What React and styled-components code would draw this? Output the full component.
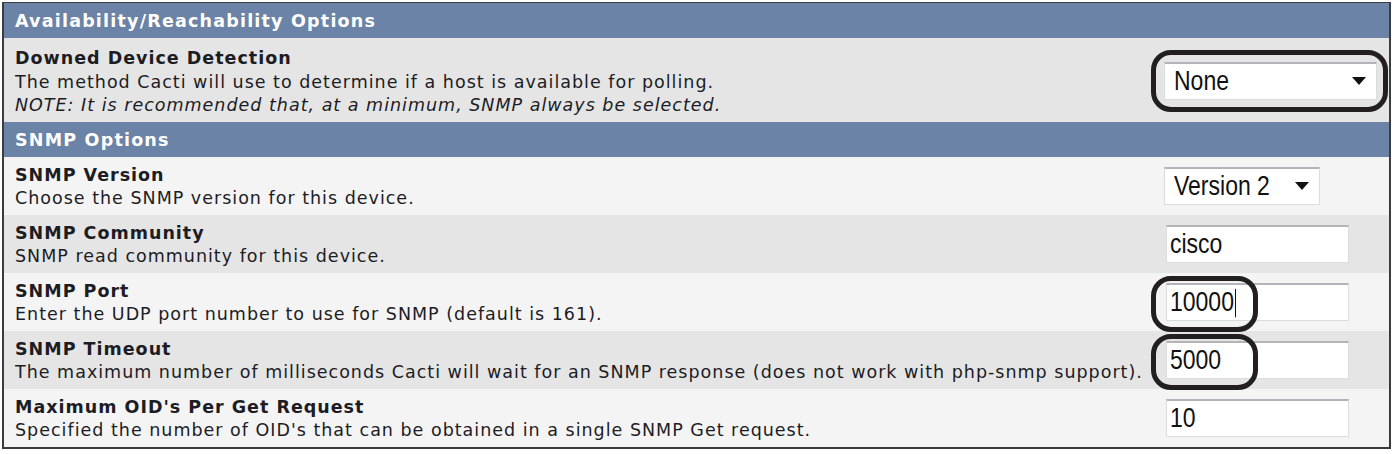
import { createGlobalStyle, styled } from "styled-components";

const Global = createGlobalStyle`
  html, body {
    margin: 0;
    padding: 0;
    background: #ffffff;
  }
`;

const Panel = styled.div`
  box-sizing: border-box;
  width: 1389px;
  margin: 2px 0 0 2px;
  border: 2px solid #3c3c3c;
  border-top-width: 1px;
  font-family: "DejaVu Sans", Verdana, sans-serif;
  color: #1c1c24;
`;

const Header = styled.div`
  height: 35px;
  display: flex;
  align-items: center;
  padding: 1px 0 0 11px;
  box-sizing: border-box;
  background: #6a83a6;
  color: #ffffff;
  font-weight: bold;
  font-size: 17.5px;
  letter-spacing: 1.2px;
`;

const Row = styled.div`
  display: grid;
  grid-template-columns: 1fr 225px;
  align-items: center;
  padding: ${(p) => (p.$tall ? "9px 0 4px" : "7px 0 4px")};
  background: ${(p) => (p.$alt ? "#e5e5e5" : "#f4f4f4")};
`;

const Text = styled.div`
  padding-left: 11px;
  font-size: 17.5px;
  letter-spacing: 1px;
  line-height: 23.5px;
  white-space: nowrap;
`;

const Title = styled.div`
  font-weight: bold;
`;

const Note = styled.div`
  font-style: italic;
`;

const Cell = styled.div`
  display: flex;
  align-items: center;
  margin-top: -3px;
  padding-left: ${(p) => p.$pad || 0}px;
`;

const Field = styled.div`
  position: relative;
  box-sizing: border-box;
  width: ${(p) => p.$w}px;
  height: 38px;
  display: flex;
  align-items: center;
  justify-content: space-between;
  padding: 0 10px 0 ${(p) => (p.$text ? 3 : 9)}px;
  background: #ffffff;
  border: 1px solid #dcdcdc;
  border-top: 2px solid #b4b4b8;
  font-family: "Liberation Sans", Arial, sans-serif;
  font-size: 23px;
  color: #111111;
`;

const Value = styled.span`
  display: inline-flex;
  align-items: center;
  transform: scaleY(1.18);
`;

const Arrow = styled.span`
  width: 0;
  height: 0;
  border-left: 7px solid transparent;
  border-right: 7px solid transparent;
  border-top: 8px solid #111111;
`;

const Caret = styled.span`
  display: inline-block;
  width: 1px;
  height: 24px;
  margin-left: 1px;
  background: #111111;
`;

const Mark = styled.div`
  position: absolute;
  left: ${(p) => p.$l}px;
  top: ${(p) => p.$t}px;
  width: ${(p) => p.$w}px;
  height: ${(p) => p.$h}px;
  box-sizing: border-box;
  border: 5px solid #231f20;
  border-radius: 20px;
  pointer-events: none;
`;

function Select({ w, value, children }) {
  return (
    <Field $w={w}>
      <Value>{value}</Value>
      <Arrow />
      {children}
    </Field>
  );
}

function Input({ value, caret, children }) {
  return (
    <Field $w={183} $text>
      <Value>
        {value}
        {caret && <Caret />}
      </Value>
      {children}
    </Field>
  );
}

export default function App() {
  return (
    <>
      <Global />
      <Panel>
        <Header>Availability/Reachability Options</Header>
        <Row $alt $tall>
          <Text>
            <Title>Downed Device Detection</Title>
            <div>The method Cacti will use to determine if a host is available for polling.</div>
            <Note>NOTE: It is recommended that, at a minimum, SNMP always be selected.</Note>
          </Text>
          <Cell>
            <Select w={213} value="None">
              <Mark $l={-14} $t={-14} $w={237} $h={62} />
            </Select>
          </Cell>
        </Row>
        <Header>SNMP Options</Header>
        <Row>
          <Text>
            <Title>SNMP Version</Title>
            <div>Choose the SNMP version for this device.</div>
          </Text>
          <Cell>
            <Select w={156} value="Version 2" />
          </Cell>
        </Row>
        <Row $alt>
          <Text>
            <Title>SNMP Community</Title>
            <div>SNMP read community for this device.</div>
          </Text>
          <Cell $pad={2}>
            <Input value="cisco" />
          </Cell>
        </Row>
        <Row>
          <Text>
            <Title>SNMP Port</Title>
            <div>Enter the UDP port number to use for SNMP (default is 161).</div>
          </Text>
          <Cell $pad={2}>
            <Input value="10000" caret>
              <Mark $l={-16} $t={-9} $w={107} $h={56} />
            </Input>
          </Cell>
        </Row>
        <Row $alt>
          <Text>
            <Title>SNMP Timeout</Title>
            <div>
              The maximum number of milliseconds Cacti will wait for an SNMP response (does not work
              with php-snmp support).
            </div>
          </Text>
          <Cell $pad={2}>
            <Input value="5000">
              <Mark $l={-16} $t={-9} $w={107} $h={56} />
            </Input>
          </Cell>
        </Row>
        <Row>
          <Text>
            <Title>Maximum OID's Per Get Request</Title>
            <div>Specified the number of OID's that can be obtained in a single SNMP Get request.</div>
          </Text>
          <Cell $pad={2}>
            <Input value="10" />
          </Cell>
        </Row>
      </Panel>
    </>
  );
}
